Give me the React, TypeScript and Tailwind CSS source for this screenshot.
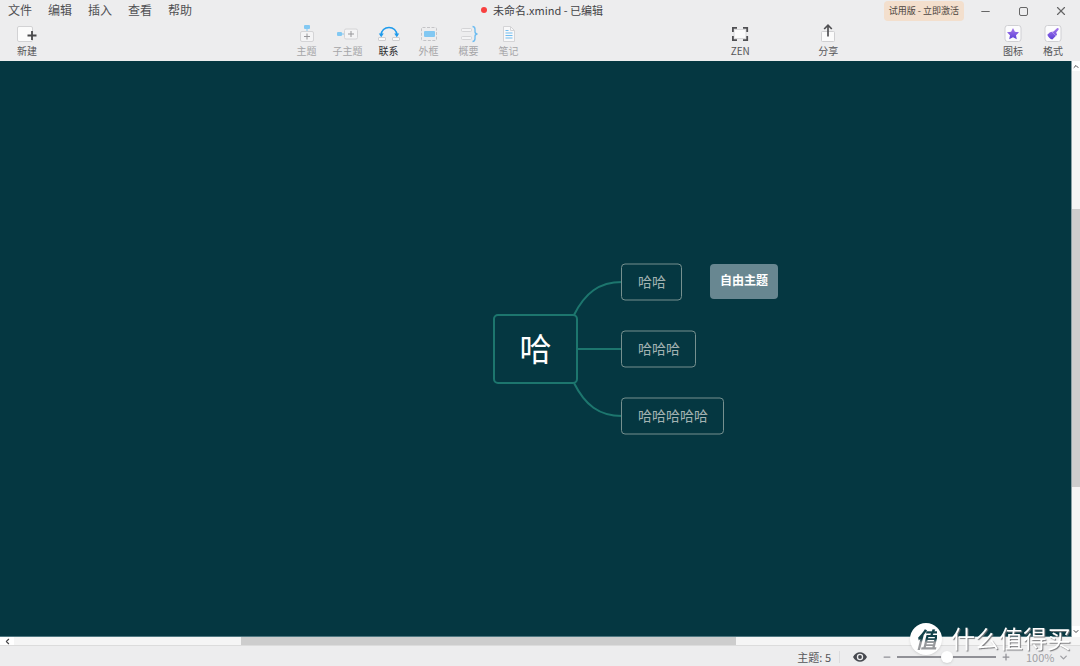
import React, { useState } from 'react';
import { ChevronDown, ChevronLeft, ChevronUp, Minus, Plus, X } from 'lucide-react';

const menus = ['文件', '编辑', '插入', '查看', '帮助'];
const topics = ['哈哈', '哈哈哈', '哈哈哈哈哈'];

interface ToolProps {
  label: string;
  width?: string;
  disabled?: boolean;
  strong?: boolean;
  children: React.ReactNode;
}

const Tool: React.FC<ToolProps> = ({ label, width = 'w-10', disabled, strong, children }) => (
  <button
    type="button"
    disabled={disabled}
    className={`${width} flex shrink-0 flex-col items-center whitespace-nowrap text-[10px] leading-[14px]
      ${disabled ? 'text-[#a5a5a8]' : strong ? 'text-[#2f2f31]' : 'text-[#555558]'}
    `}
  >
    <svg width="24" height="20" viewBox="0 0 24 20" fill="none" aria-hidden="true">
      {children}
    </svg>
    {label}
  </button>
);

const App: React.FC = () => {
  const [zoom, setZoom] = useState(50);
  const [scale, setScale] = useState('100%');

  return (
    <div className="flex h-screen flex-col overflow-hidden bg-[#ededee] font-['Noto_Sans_CJK_SC',sans-serif] text-[#444447]">
      {/* Title bar */}
      <header className="grid h-[22px] shrink-0 grid-cols-[1fr_auto_1fr] items-center">
        <nav className="flex self-start text-xs leading-5">
          {menus.map(m => (
            <button key={m} type="button" className="w-10 text-center text-[#505053]">
              {m}
            </button>
          ))}
        </nav>
        <h1 className="flex items-center gap-[6px] self-start whitespace-nowrap pl-1 text-[11px] leading-5">
          <span className="size-[6px] rounded-full bg-[#f8403f]" />
          <span>未命名.xmind - 已编辑</span>
        </h1>
        <div className="flex items-center justify-end">
          <button type="button" className="mr-[2px] h-5 whitespace-nowrap rounded bg-[#f3dfcd] px-[5px] text-[9px] leading-4 text-[#4c4540]">
            试用版 - 立即激活
          </button>
          <button type="button" aria-label="最小化" className="flex w-[38px] justify-center">
            <Minus size={13} strokeWidth={2} className="text-[#666]" />
          </button>
          <button type="button" aria-label="最大化" className="flex w-[38px] justify-center">
            <span className="size-[9px] rounded-xs border border-[#666]" />
          </button>
          <button type="button" aria-label="关闭" className="flex w-[38px] justify-center">
            <X size={14} strokeWidth={2} className="text-[#666]" />
          </button>
        </div>
      </header>

      {/* Toolbar */}
      <div className="flex h-[39px] shrink-0 items-start px-[7px] pt-[2px]">
        <Tool label="新建">
          <rect x="2.5" y="2.5" width="15" height="15" rx="1.5" fill="#fbfbfb" stroke="#d2d2d4" />
          <path d="M17 7v9M12.5 11.5h9" stroke="#48484a" strokeWidth="1.8" />
        </Tool>
        <div className="flex-[240]" />
        <Tool label="主题" disabled>
          <rect x="9" y="1" width="6" height="4" rx="1" fill="#82c8f2" />
          <path d="M12 5v3" stroke="#82c8f2" />
          <rect x="5.5" y="7.5" width="13" height="10" rx="1.5" fill="#f4f4f5" stroke="#d4d4d6" />
          <path d="M12 9.5v6M9 12.5h6" stroke="#98989b" />
        </Tool>
        <Tool label="子主题" width="w-[42px]" disabled>
          <rect x="1" y="8" width="5" height="4" rx="1" fill="#82c8f2" />
          <path d="M6 10h3" stroke="#82c8f2" />
          <rect x="8.5" y="5" width="13" height="10" rx="1.5" fill="#f4f4f5" stroke="#d4d4d6" />
          <path d="M15 7v6M12 10h6" stroke="#98989b" />
        </Tool>
        <Tool label="联系" strong>
          <path d="M4 11.5C4 .8 20 .8 20 11.5" stroke="#1f9bec" strokeWidth="1.6" />
          <path d="M1.8 9.5h5L4.2 13.2zM22.2 9.5h-5l2.6 3.7z" fill="#1f9bec" />
          <rect x="1.5" y="13.5" width="7" height="3" rx=".5" fill="#fafafa" stroke="#cfcfd1" />
          <rect x="15.5" y="13.5" width="7" height="3" rx=".5" fill="#fafafa" stroke="#cfcfd1" />
        </Tool>
        <Tool label="外框" disabled>
          <rect x="4.5" y="3.5" width="15" height="13" rx="1" stroke="#c4c4c7" strokeDasharray="3 1.5" />
          <rect x="7" y="7" width="11" height="6" rx="1" fill="#82c8f2" />
        </Tool>
        <Tool label="概要" disabled>
          <rect x="4.5" y="4.5" width="10" height="3" rx="1" fill="#f4f4f5" stroke="#d4d4d6" />
          <rect x="4.5" y="12.5" width="10" height="3" rx="1" fill="#f4f4f5" stroke="#d4d4d6" />
          <path d="M15.5 2.5c2 0 2.5 1 2.5 3v2c0 1.5.5 2.5 2.5 2.5-2 0-2.5 1-2.5 2.5v2c0 2-.5 3-2.5 3" stroke="#70bdf0" strokeWidth="1.4" />
        </Tool>
        <Tool label="笔记" disabled>
          <path d="M6.5 2.5h7l4 4v11h-11z" fill="#f8f8f9" stroke="#d4d4d6" />
          <path d="M13.5 2.5v4h4" stroke="#d4d4d6" />
          <path d="M8.5 6.5h3M8.5 9h7M8.5 11.5h7M8.5 14h7" stroke="#70bdf0" />
        </Tool>
        <div className="flex-[192]" />
        <Tool label="ZEN">
          <rect x="6" y="5.5" width="12" height="9" rx="1" fill="#fbfbfb" stroke="#d8d8da" />
          <path d="M4.9 8V3.9H9M15 3.9h4.2V8M19.2 12v4.1H15M9 16.1H4.9V12" stroke="#505053" strokeWidth="1.8" />
        </Tool>
        <div className="w-12 shrink-0" />
        <Tool label="分享">
          <rect x="5.5" y="7.5" width="13" height="10" rx="1" fill="#fbfbfb" stroke="#cfcfd1" />
          <path d="M12 12.5V1.5M8.2 5L12 1.2 15.8 5" stroke="#505053" strokeWidth="1.7" />
        </Tool>
        <div className="flex-[145]" />
        <Tool label="图标">
          <defs>
            <linearGradient id="violet" x1="0" y1="0" x2="0" y2="1">
              <stop offset="0" stopColor="#a779ec" />
              <stop offset="1" stopColor="#5b3fd6" />
            </linearGradient>
          </defs>
          <rect x="4" y="1.5" width="16" height="16" rx="2.5" fill="#fcfcfd" stroke="#d0d0d3" />
          <path d="M12 4l1.900 3.700 4.100.6-3 2.900.8 4.100L12 13.300l-3.800 2 .8-4.100-3-2.900 4.100-.6z" fill="url(#violet)" />
        </Tool>
        <Tool label="格式">
          <rect x="4" y="1.5" width="16" height="16" rx="2.5" fill="#fcfcfd" stroke="#d0d0d3" />
          <path d="M16 4.200c1-.8 2.300.4 1.500 1.500l-2.300 2.800.8 2.300-4.700 4.700c-2-.5-4.400-2.600-5-4.800L9 8.200l3.500-.7z" fill="url(#violet)" />
          <path d="M10.5 7.5l4.800 4.600" stroke="#d9c9fa" strokeWidth=".5" />
        </Tool>
      </div>

      {/* Canvas */}
      <div className="flex min-h-0 flex-1">
        <main className="flex min-w-0 flex-1 items-center justify-center border-b border-[#4f7780] bg-[#053741] font-['Open_Sans','Noto_Sans_CJK_SC',sans-serif]">
          <div className="relative">
            <div className="flex h-[70px] w-[85px] items-center justify-center rounded-[5px] border-2 border-[#1d766e] text-[32px] leading-10 text-white">
              哈
            </div>
            <svg className="absolute -top-12 left-20" width="50" height="166" viewBox="0 0 50 166" fill="none" stroke="#1d766e" strokeWidth="2" aria-hidden="true">
              <path d="M1 49C12 27 26 16 49 16" />
              <path d="M4 83H49" />
              <path d="M1 117C12 139 26 150 49 150" />
            </svg>
            <div className="absolute top-1/2 left-full ml-[43px] flex -translate-y-1/2 flex-col items-start gap-[30px]">
              {topics.map(t => (
                <div key={t} className="flex h-[37px] items-center whitespace-nowrap rounded border border-[#76908f] bg-[#053741] pr-[15px] pl-4 text-sm text-[#a3b3b3]">
                  {t}
                </div>
              ))}
            </div>
            <div className="absolute -top-[50px] left-[217px] flex h-[35px] items-center whitespace-nowrap rounded bg-[#688791] px-[10px] text-xs font-bold text-white">
              自由主题
            </div>
          </div>
        </main>
        <div className="flex w-[9px] shrink-0 flex-col border-l border-[#8aa1a6] bg-[#f5f5f5]">
          <div className="flex h-[10px] items-center justify-center bg-white"><ChevronUp size={9} strokeWidth={3} /></div>
          <div className="flex-[138]" />
          <div className="flex-[278] bg-[#cdcdcd]" />
          <div className="flex-[139]" />
          <div className="flex h-[11px] items-center justify-center bg-white"><ChevronDown size={9} strokeWidth={3} /></div>
        </div>
      </div>
      <div className="flex h-[9px] shrink-0 border-b border-[#dcdcdc] bg-[#f5f5f5]">
        <div className="flex w-[14px] items-center justify-center bg-white"><ChevronLeft size={9} strokeWidth={3} /></div>
        <div className="flex-[227]" />
        <div className="flex-[495] bg-[#cdcdcd]" />
        <div className="flex-[344]" />
      </div>

      {/* Status bar */}
      <footer className="flex h-5 shrink-0 items-center justify-end pt-[2px] pr-[11px] text-[11px] leading-5">
        <span className="mr-2 text-[#555558]">主题: 5</span>
        <span className="h-3 w-px bg-[#dcdcde]" />
        <button type="button" aria-label="预览" className="mr-[15px] ml-[13px]">
          <svg width="14" height="10" viewBox="0 0 14 10" aria-hidden="true">
            <path d="M0 5C3-1.300 11-1.300 14 5 11 11.300 3 11.300 0 5z" fill="#46494f" />
            <circle cx="7" cy="5" r="3.2" fill="#ededee" />
            <circle cx="7" cy="5" r="1.9" fill="#46494f" />
          </svg>
        </button>
        <button type="button" aria-label="缩小"><Minus size={10} strokeWidth={3} className="text-[#909096]" /></button>
        <input
          type="range"
          aria-label="缩放"
          value={zoom}
          onChange={(e) => setZoom(Number(e.target.value))}
          className="mx-[5px] h-[2px] w-[99px] appearance-none bg-[#909096] [&::-webkit-slider-thumb]:size-3 [&::-webkit-slider-thumb]:appearance-none [&::-webkit-slider-thumb]:rounded-full [&::-webkit-slider-thumb]:bg-white [&::-webkit-slider-thumb]:shadow-sm"
        />
        <button type="button" aria-label="放大"><Plus size={10} strokeWidth={3} className="text-[#909096]" /></button>
        <select
          aria-label="缩放比例"
          value={scale}
          onChange={(e) => setScale(e.target.value)}
          className="ml-[15px] appearance-none text-[11px] leading-5 text-[#a0a0a5]"
        >
          <option>100%</option>
          <option>50%</option>
        </select>
        <ChevronDown size={11} strokeWidth={3} className="ml-[3px] text-[#a0a0a5]" />
      </footer>

      {/* Watermark */}
      <div className="pointer-events-none fixed right-[9px] bottom-[11px] flex items-center gap-[9px] whitespace-nowrap font-['Open_Sans','Noto_Sans_CJK_SC',sans-serif]">
        <div className="flex size-8 items-center justify-center rounded-full bg-white shadow">
          <span className="bg-linear-to-b from-[#12424b] from-50% to-[#97999c] to-60% bg-clip-text text-[22px] leading-8 font-bold text-transparent italic">值</span>
        </div>
        <span className="text-2xl leading-8 text-white [text-shadow:1px_1px_1px_#77777a]">什么值得买</span>
      </div>
    </div>
  );
};

export default App;
